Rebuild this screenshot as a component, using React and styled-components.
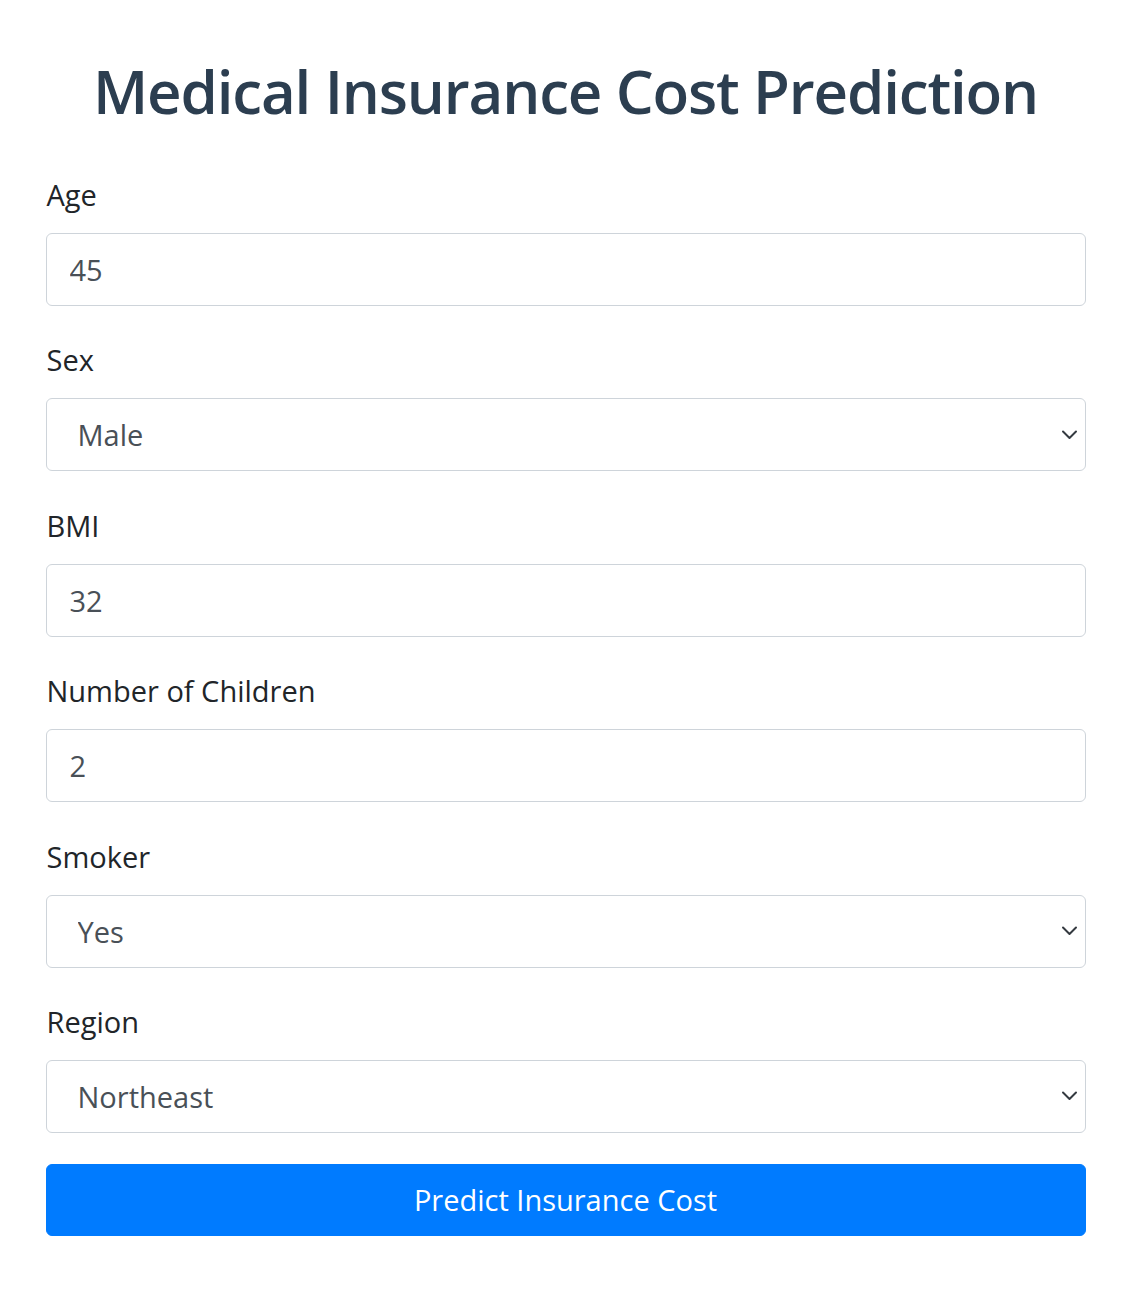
import React, { useState } from "react";
import styled, { createGlobalStyle } from "styled-components";

const GlobalStyle = createGlobalStyle`
  html, body {
    margin: 0;
    padding: 0;
    background: #fff;
  }
  body {
    font-family: "Open Sans", "Noto Sans", "Liberation Sans", sans-serif;
    color: #212529;
  }
  * {
    box-sizing: border-box;
  }
`;

const Page = styled.div`
  max-width: 1040px;
  margin: 0 auto;
  padding: 53px 0 40px;
`;

const Title = styled.h1`
  margin: 0 0 44px;
  font-size: 60px;
  line-height: 77px;
  font-weight: 600;
  color: #2c3e50;
  text-align: center;
  letter-spacing: -1.15px;
`;

const Form = styled.form`
  display: flex;
  flex-direction: column;
`;

const Group = styled.div`
  display: flex;
  flex-direction: column;
  margin-bottom: 33.4px;
`;

const Label = styled.label`
  font-size: 29px;
  line-height: 42px;
  margin-bottom: 17px;
  padding-left: 1px;
  color: #212529;
`;

const Field = styled.input`
  width: 100%;
  height: 73px;
  padding: 0 23px;
  font-family: inherit;
  font-size: 29px;
  color: #495057;
  background: #fff;
  border: 1px solid #ced4da;
  border-radius: 6px;
  outline: none;
`;

const SelectWrap = styled.div`
  position: relative;
`;

const Select = styled.select`
  width: 100%;
  height: 73px;
  padding: 0 50px 0 31px;
  font-family: inherit;
  font-size: 29px;
  color: #495057;
  background: #fff;
  border: 1px solid #ced4da;
  border-radius: 6px;
  outline: none;
  appearance: none;
  -webkit-appearance: none;
`;

const Chevron = styled.svg`
  position: absolute;
  right: 8px;
  top: 50%;
  width: 17px;
  height: 11px;
  transform: translateY(-50%);
  pointer-events: none;
`;

const Button = styled.button`
  width: 100%;
  height: 72px;
  margin-top: -2.4px;
  font-family: inherit;
  font-size: 29px;
  color: #fff;
  background: #007bff;
  border: 1px solid #007bff;
  border-radius: 6px;
  cursor: pointer;
`;

function SelectField({ value, onChange, options }) {
  return (
    <SelectWrap>
      <Select value={value} onChange={(e) => onChange(e.target.value)}>
        {options.map((o) => (
          <option key={o} value={o}>
            {o}
          </option>
        ))}
      </Select>
      <Chevron viewBox="0 0 17 11">
        <path
          d="M2 2l6.5 6.5L15 2"
          fill="none"
          stroke="#343a40"
          strokeWidth="2"
          strokeLinecap="round"
          strokeLinejoin="round"
        />
      </Chevron>
    </SelectWrap>
  );
}

export default function App() {
  const [age, setAge] = useState("45");
  const [sex, setSex] = useState("Male");
  const [bmi, setBmi] = useState("32");
  const [children, setChildren] = useState("2");
  const [smoker, setSmoker] = useState("Yes");
  const [region, setRegion] = useState("Northeast");

  return (
    <>
      <GlobalStyle />
      <Page>
        <Title>Medical Insurance Cost Prediction</Title>
        <Form onSubmit={(e) => e.preventDefault()}>
          <Group>
            <Label htmlFor="age">Age</Label>
            <Field id="age" type="text" value={age} onChange={(e) => setAge(e.target.value)} />
          </Group>
          <Group>
            <Label>Sex</Label>
            <SelectField value={sex} onChange={setSex} options={["Male", "Female"]} />
          </Group>
          <Group>
            <Label htmlFor="bmi">BMI</Label>
            <Field id="bmi" type="text" value={bmi} onChange={(e) => setBmi(e.target.value)} />
          </Group>
          <Group>
            <Label htmlFor="children">Number of Children</Label>
            <Field
              id="children"
              type="text"
              value={children}
              onChange={(e) => setChildren(e.target.value)}
            />
          </Group>
          <Group>
            <Label>Smoker</Label>
            <SelectField value={smoker} onChange={setSmoker} options={["Yes", "No"]} />
          </Group>
          <Group>
            <Label>Region</Label>
            <SelectField
              value={region}
              onChange={setRegion}
              options={["Northeast", "Northwest", "Southeast", "Southwest"]}
            />
          </Group>
          <Button type="submit">Predict Insurance Cost</Button>
        </Form>
      </Page>
    </>
  );
}
